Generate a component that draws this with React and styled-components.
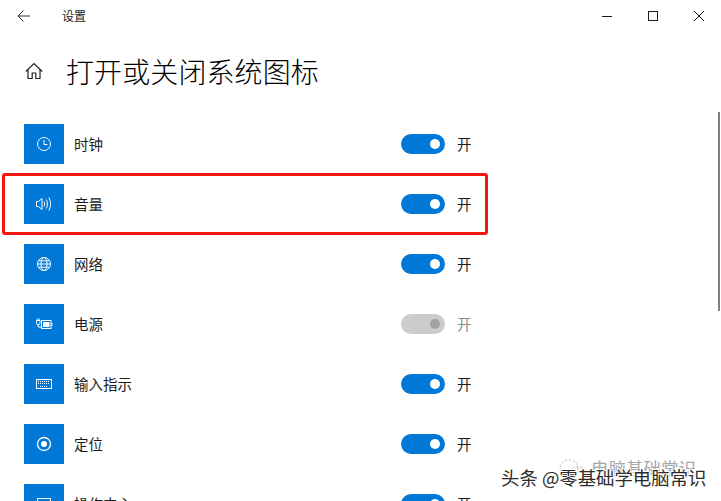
import React from "react";
import styled, { createGlobalStyle } from "styled-components";

const Global = createGlobalStyle`
  html, body { margin: 0; padding: 0; background: #fff; }
  body { font-family: "Noto Sans CJK SC", "Liberation Sans", sans-serif; color: #111; }
`;

const Page = styled.div`
  position: relative;
  width: 721px;
  height: 501px;
  overflow: hidden;
  background: #fff;
`;

const TitleBar = styled.header`
  display: flex;
  align-items: center;
  height: 32px;
  padding-left: 17px;
`;

const BackButton = styled.span`
  display: flex;
  width: 45px;
`;

const AppName = styled.span`
  font-size: 12px;
  line-height: 32px;
  color: #222;
`;

const WindowControls = styled.div`
  display: flex;
  align-items: center;
  margin-left: auto;
  padding-right: 17px;
  gap: 36px;
`;

const ControlIcon = styled.svg`
  display: block;
  width: 10px;
  height: 10px;
  stroke: #1a1a1a;
  fill: none;
`;

const Heading = styled.div`
  display: flex;
  align-items: center;
  height: 52px;
  margin-top: 13px;
  padding-left: 25px;
`;

const HomeIcon = styled.svg`
  display: block;
  width: 18px;
  height: 18px;
  margin-right: 24px;
  stroke: #222;
  fill: none;
`;

const Title = styled.h1`
  margin: 0 0 0 -1px;
  font-size: 28px;
  font-weight: 300;
  line-height: 52px;
  letter-spacing: 0.1px;
  color: #000;
`;

const List = styled.div`
  display: flex;
  flex-direction: column;
  gap: 20px;
  margin-top: 27px;
  padding-left: 24px;
`;

const Row = styled.div`
  display: flex;
  align-items: center;
  height: 40px;
  flex: none;
`;

const IconTile = styled.div`
  display: flex;
  align-items: center;
  justify-content: center;
  flex: none;
  width: 40px;
  height: 40px;
  background: #0078d7;
`;

const TileSvg = styled.svg`
  display: block;
  width: 16px;
  height: 16px;
  overflow: visible;
  stroke: #fff;
  fill: none;
  stroke-width: 1;
`;

const Label = styled.span`
  width: 327px;
  margin-left: 10px;
  font-size: 14.5px;
  line-height: 20px;
  color: #1c1c1c;
`;

const Toggle = styled.span`
  display: flex;
  align-items: center;
  justify-content: flex-end;
  flex: none;
  width: 44px;
  height: 20px;
  padding-right: 5px;
  box-sizing: border-box;
  border-radius: 10px;
  background: ${(p) => (p.$disabled ? "#cccccc" : "#0078d7")};
`;

const Knob = styled.span`
  width: 10px;
  height: 10px;
  border-radius: 50%;
  background: ${(p) => (p.$disabled ? "#a3a3a3" : "#fff")};
`;

const State = styled.span`
  margin-left: 12px;
  font-size: 14.5px;
  line-height: 20px;
  color: ${(p) => (p.$disabled ? "#8c8c8c" : "#1c1c1c")};
`;

const Highlight = styled.div`
  position: absolute;
  left: 2px;
  top: 173px;
  width: 486px;
  height: 62px;
  box-sizing: border-box;
  border: 3px solid #f5170f;
  border-radius: 3px;
`;

const ScrollThumb = styled.div`
  position: absolute;
  left: 718px;
  top: 112px;
  width: 2px;
  height: 199px;
  background: #7f7f7f;
`;

const Watermark = styled.div`
  position: absolute;
  left: 501px;
  top: 466px;
  font-size: 18.4px;
  line-height: 22px;
  white-space: nowrap;
  color: #2b2b2b;
  text-shadow: 1px 1px 0 #fff, -1px -1px 0 #fff, 1px -1px 0 #fff, -1px 1px 0 #fff;
`;

const WatermarkBack = styled.div`
  position: absolute;
  left: 591px;
  top: 458px;
  font-size: 17.5px;
  line-height: 20px;
  white-space: nowrap;
  color: #a8a8a8;
`;

const WeChatMark = styled.svg`
  position: absolute;
  left: 558px;
  top: 458px;
  width: 30px;
  height: 24px;
  stroke: #b5b5b5;
  fill: none;
`;

const icons = {
  clock: (
    <>
      <circle cx="8" cy="8" r="6.5" />
      <path d="M8 4v4.5h3.5" />
    </>
  ),
  volume: (
    <>
      <path d="M.5 5.500v5h2l3.500 3V2.500L2.500 5.500z" />
      <path d="M8 5.500c.9 1.500.9 3.500 0 5M10.300 3.500c1.500 2.700 1.500 6.300 0 9M12.800 1.500c2.300 4 2.300 9 0 13" />
    </>
  ),
  globe: (
    <>
      <circle cx="8" cy="8" r="6.5" />
      <ellipse cx="8" cy="8" rx="3" ry="6.500" />
      <path d="M1.500 8h13M2.500 4.800h11M2.500 11.200h11" />
    </>
  ),
  battery: (
    <>
      <rect x="5.500" y="4.500" width="9.500" height="8" />
      <rect x="7" y="6" width="6.500" height="5" fill="#fff" stroke="none" />
      <path d="M16 7v3" />
      <path d="M.5 4.500h3.500V7a1.750 1.750 0 0 1-3.500 0zM1.300 2.500v2M3.200 2.500v2M2.200 8.500v2.500h3.300" />
    </>
  ),
  keyboard: (
    <>
      <rect x="0.500" y="3.500" width="15" height="9" />
      <path d="M2 5.500h12M2 7.500h12M4 10.500h8" strokeDasharray="1 1" />
    </>
  ),
  location: (
    <>
      <circle cx="8" cy="8" r="6.500" strokeWidth="1.300" />
      <circle cx="8" cy="8" r="3" fill="#fff" stroke="none" />
    </>
  ),
  action: (
    <>
      <rect x="1.500" y="2.500" width="13" height="11" />
      <path d="M4 5.500h8M4 8h8" />
    </>
  ),
};

const rows = [
  { icon: "clock", label: "时钟" },
  { icon: "volume", label: "音量" },
  { icon: "globe", label: "网络" },
  { icon: "battery", label: "电源", disabled: true },
  { icon: "keyboard", label: "输入指示" },
  { icon: "location", label: "定位" },
  { icon: "action", label: "操作中心" },
];

export default function App() {
  return (
    <Page>
      <Global />
      <TitleBar>
        <BackButton>
          <svg width="14" height="14" viewBox="0 0 14 14" fill="none" stroke="#333" strokeWidth="1">
            <path d="M1 7h12M6.500 1.500L1 7l5.500 5.500" />
          </svg>
        </BackButton>
        <AppName>设置</AppName>
        <WindowControls>
          <ControlIcon viewBox="0 0 10 10"><path d="M0 5.500h10" /></ControlIcon>
          <ControlIcon viewBox="0 0 10 10"><rect x=".5" y=".5" width="9" height="9" /></ControlIcon>
          <ControlIcon viewBox="0 0 10 10"><path d="M0 0l10 10M10 0L0 10" /></ControlIcon>
        </WindowControls>
      </TitleBar>
      <Heading>
        <HomeIcon viewBox="0 0 18 18">
          <path d="M.8 9.500L9 1.500l8.200 8M3 7.500v9h4.200v-5.500h3.600v5.500H15v-9" strokeWidth="1.200" />
        </HomeIcon>
        <Title>打开或关闭系统图标</Title>
      </Heading>
      <List>
        {rows.map((r) => (
          <Row key={r.label}>
            <IconTile>
              <TileSvg viewBox="0 0 16 16">{icons[r.icon]}</TileSvg>
            </IconTile>
            <Label>{r.label}</Label>
            <Toggle $disabled={r.disabled}>
              <Knob $disabled={r.disabled} />
            </Toggle>
            <State $disabled={r.disabled}>开</State>
          </Row>
        ))}
      </List>
      <Highlight />
      <ScrollThumb />
      <WeChatMark viewBox="0 0 30 24">
        <ellipse cx="11" cy="10" rx="9" ry="8" strokeDasharray="2 2" />
        <ellipse cx="20" cy="15" rx="8" ry="6.500" strokeDasharray="2 2" />
      </WeChatMark>
      <WatermarkBack>电脑基础常识</WatermarkBack>
      <Watermark>头条 @零基础学电脑常识</Watermark>
    </Page>
  );
}
